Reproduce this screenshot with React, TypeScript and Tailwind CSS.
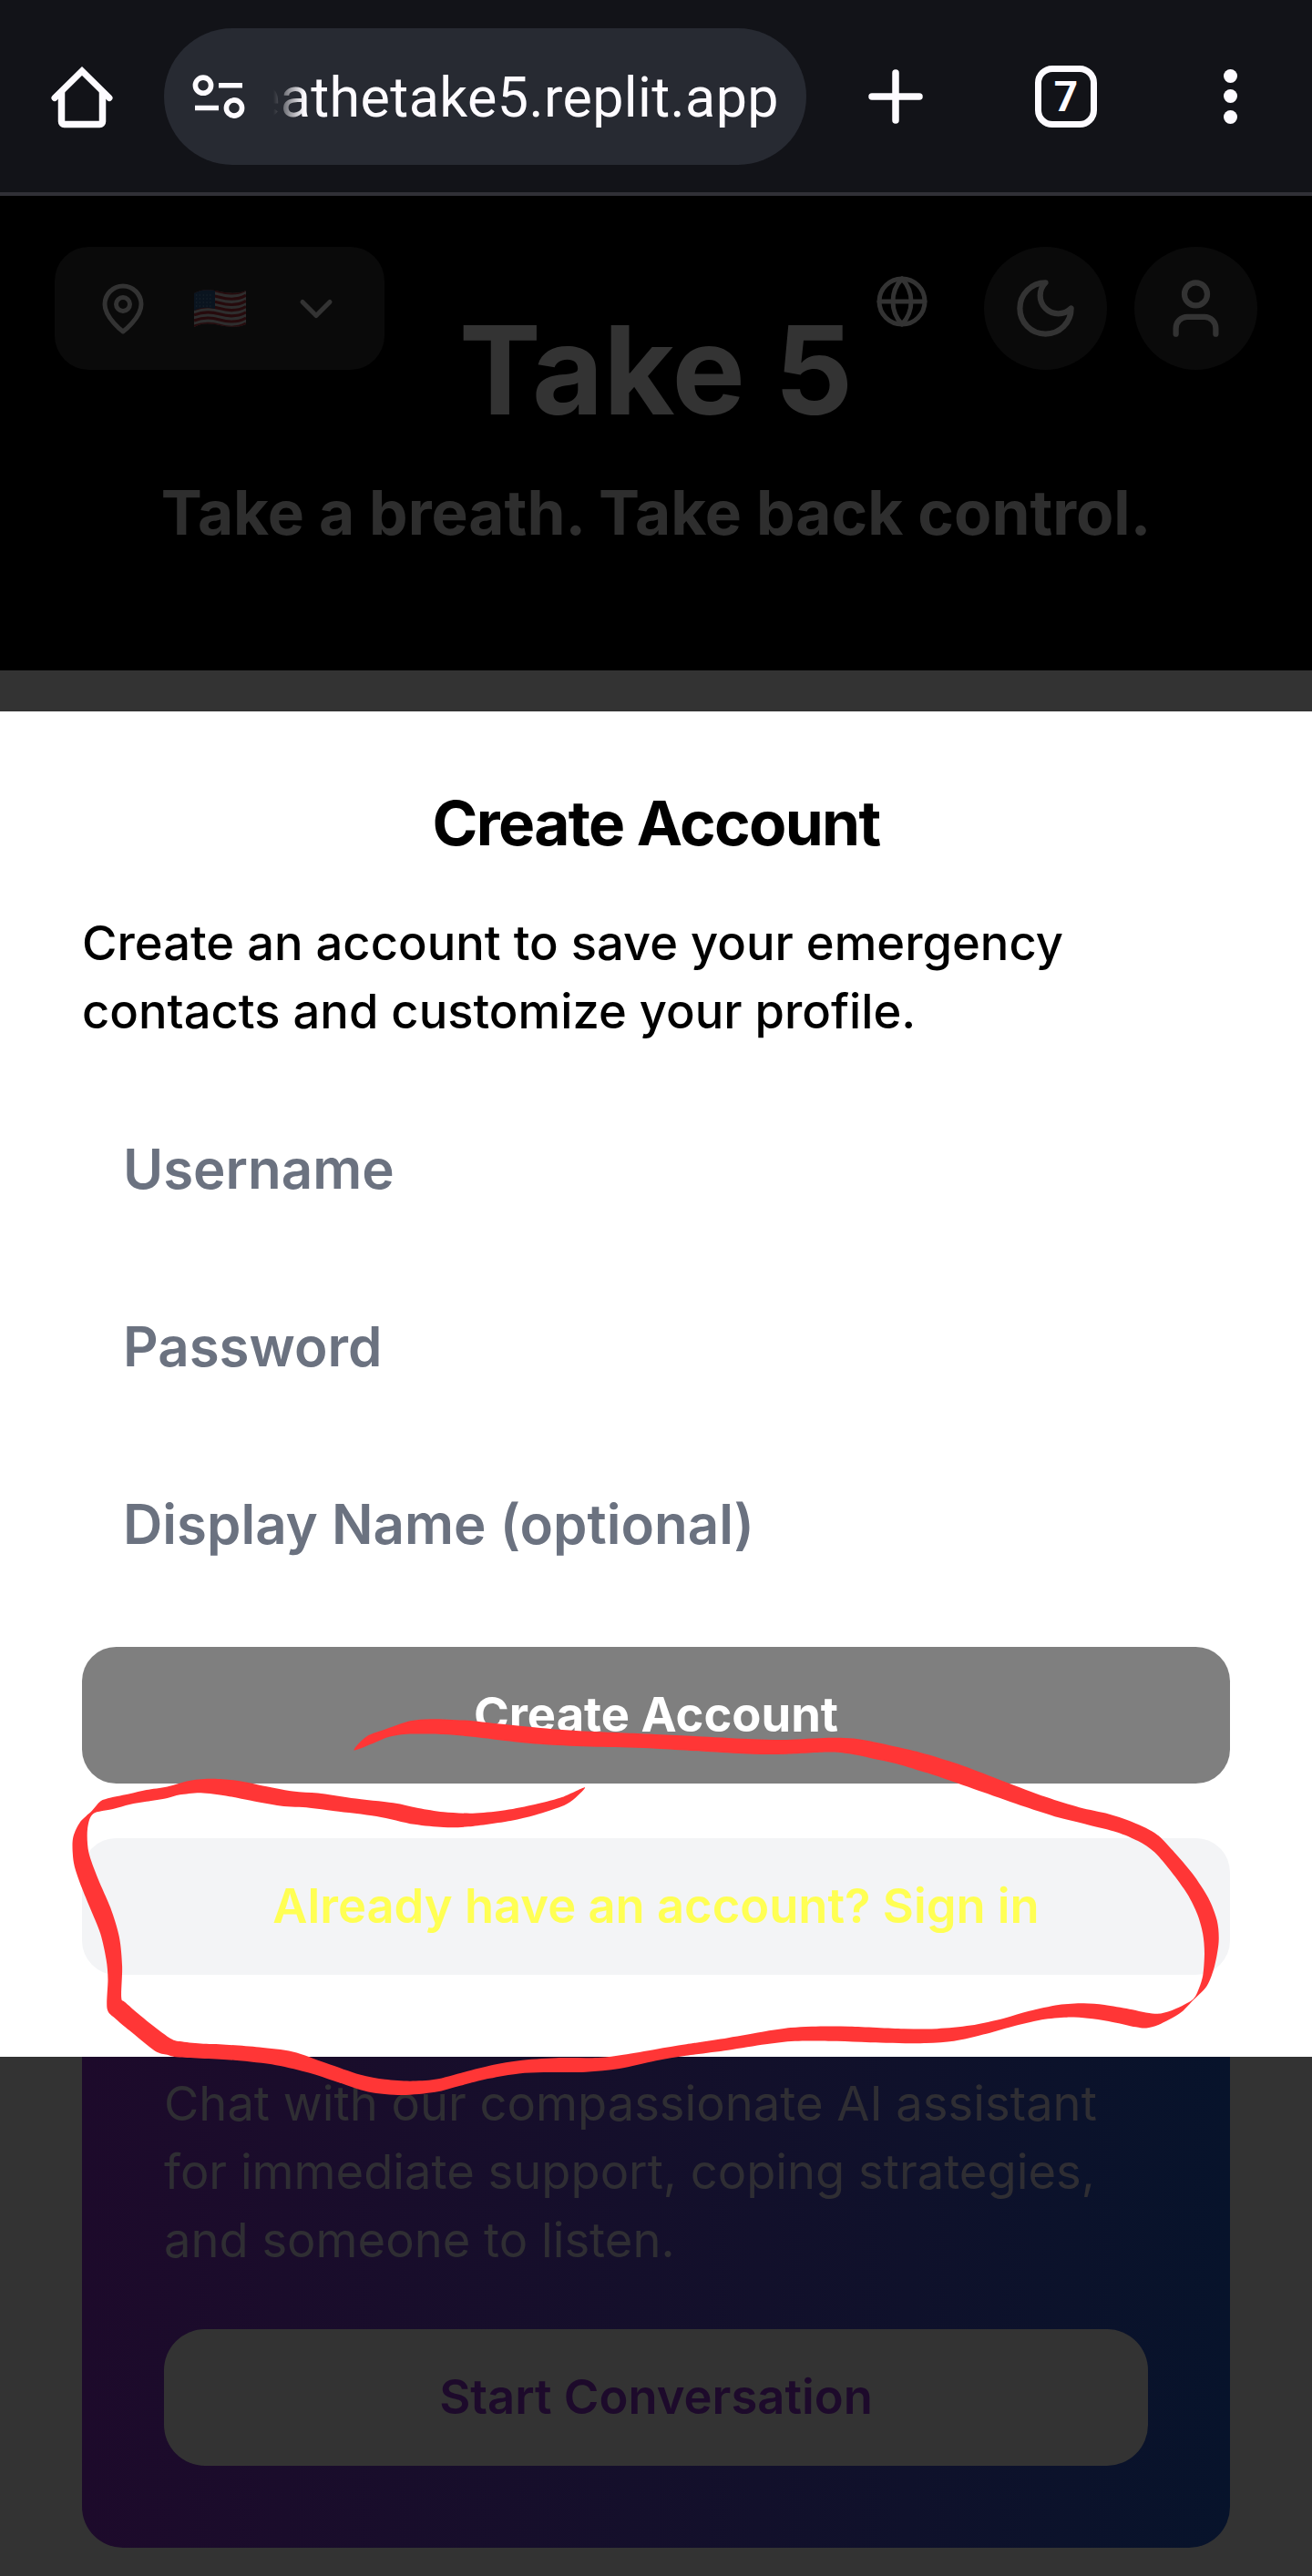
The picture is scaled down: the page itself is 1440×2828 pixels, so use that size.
import React from "react";
import { ChevronDown, Globe, Moon, User } from "lucide-react";

type Point = [number, number];

// Outline of the hand-drawn marker loop, in the marker canvas' own units (3136 x 1568).
const markerOutline: Point[] = [
  [846, 396], [876, 354], [925, 330], [980, 306], [1030, 300], [1110, 304], [1200, 316], [1320, 331], [1420, 339],
  [1568, 347], [1680, 354], [1800, 362], [1880, 364], [1980, 358], [2040, 360], [2090, 371], [2140, 385],
  [2200, 403], [2300, 443], [2400, 492], [2500, 540], [2580, 572], [2650, 592], [2700, 613], [2760, 650],
  [2800, 700], [2850, 775], [2888, 850], [2909, 920], [2913, 985], [2903, 1060], [2885, 1120], [2849, 1168],
  [2820, 1205], [2770, 1240], [2740, 1250], [2715, 1247], [2650, 1229], [2600, 1220], [2550, 1217],
  [2490, 1224], [2420, 1245], [2350, 1270], [2280, 1290], [2200, 1297], [2080, 1294], [2000, 1290],
  [1900, 1290], [1830, 1300], [1740, 1318], [1640, 1335], [1568, 1350], [1480, 1375], [1400, 1385],
  [1300, 1386], [1240, 1390], [1170, 1405], [1100, 1427], [1040, 1447], [960, 1456], [880, 1446],
  [800, 1413], [740, 1388], [660, 1364], [560, 1349], [430, 1340], [400, 1332], [370, 1320], [310, 1258],
  [275, 1220], [256, 1190], [258, 1100], [254, 1040], [240, 960], [215, 880], [190, 800], [176, 740],
  [174, 670], [190, 620], [220, 582], [240, 553], [265, 542], [310, 530], [350, 518], [400, 508], [455, 489],
  [510, 484], [570, 490], [620, 503], [700, 522], [760, 528], [840, 543], [940, 558], [1000, 574],
  [1060, 586], [1130, 590], [1200, 582], [1270, 565], [1340, 542], [1398, 510], [1368, 550], [1340, 570],
  [1280, 595], [1220, 613], [1120, 631], [1060, 633], [990, 624], [900, 599], [800, 583], [740, 573],
  [670, 567], [600, 551], [540, 536], [480, 527], [430, 533], [400, 543], [350, 554], [310, 563], [270, 577],
  [222, 592], [209, 640], [212, 710], [234, 790], [264, 880], [285, 970], [292, 1060], [290, 1155],
  [300, 1172], [350, 1227], [405, 1280], [430, 1291], [480, 1298], [540, 1301], [620, 1309], [700, 1323],
  [780, 1358], [860, 1393], [920, 1408], [980, 1413], [1040, 1408], [1110, 1385], [1180, 1363], [1240, 1350],
  [1330, 1342], [1430, 1341], [1490, 1332], [1568, 1315], [1640, 1300], [1740, 1280], [1830, 1260],
  [1890, 1249], [1940, 1245], [2030, 1245], [2160, 1252], [2240, 1252], [2320, 1242], [2400, 1220],
  [2460, 1198], [2530, 1179], [2590, 1174], [2640, 1179], [2700, 1192], [2760, 1206], [2800, 1196],
  [2847, 1166], [2862, 1140], [2875, 1090], [2879, 1020], [2875, 960], [2862, 900], [2838, 838], [2800, 770],
  [2760, 710], [2720, 675], [2670, 648], [2600, 625], [2530, 603], [2450, 570], [2350, 525], [2250, 480],
  [2150, 440], [2080, 420], [2030, 407], [1980, 402], [1880, 408], [1800, 408], [1700, 401], [1568, 391],
  [1440, 386], [1320, 380], [1230, 370], [1130, 355], [1060, 347], [980, 346], [930, 355], [895, 373],
];

// Closed Catmull-Rom curve through the given points.
function smooth(points: Point[]): string {
  const n = points.length;
  let d = `M${points[0][0]} ${points[0][1]}`;
  for (let i = 0; i < n; i++) {
    const a = points[(i + n - 1) % n];
    const b = points[i];
    const c = points[(i + 1) % n];
    const e = points[(i + 2) % n];
    const k = 7;
    d += `C${b[0] + (c[0] - a[0]) / k} ${b[1] + (c[1] - a[1]) / k} ${c[0] - (e[0] - b[0]) / k} ${c[1] - (e[1] - b[1]) / k} ${c[0]} ${c[1]}`;
  }
  return d + "Z";
}

function BrowserBar() {
  return (
    <div className="flex h-[215px] items-center border-b-4 border-[#303036] bg-[#121318] text-[#fdfbff]">
      <svg className="ml-[45px] h-[90px] w-[90px] shrink-0" viewBox="0 0 90 90" fill="none" stroke="currentColor">
        <path d="M15 46.500 45 17 75 46.500" strokeWidth="7" strokeLinecap="round" strokeLinejoin="miter" />
        <path d="M22.500 40V72.500a3 3 0 0 0 3 3H64.500a3 3 0 0 0 3-3V40" strokeWidth="7.500" />
      </svg>
      <div className="ml-[45px] flex h-[150px] w-[705px] items-center rounded-full bg-[#272a32] pl-[30px]">
        <svg className="h-[60px] w-[60px] shrink-0" viewBox="0 0 60 60" fill="none" stroke="currentColor" strokeWidth="5.6">
          <circle cx="13" cy="17.700" r="8.600" />
          <path d="M30 17.800H56M4 42.500H30" />
          <circle cx="47" cy="42.500" r="8.600" />
        </svg>
        <div className="mt-[3px] ml-[30px] flex h-[80px] w-[560px] items-center justify-end overflow-hidden whitespace-nowrap pr-[5px] font-['Roboto',sans-serif] text-[61px] leading-[80px] tracking-[0.4px] [mask-image:linear-gradient(to_right,transparent,black_34px)]">
          eathetake5.replit.app
        </div>
      </div>
      <svg className="ml-[53px] h-[90px] w-[90px] shrink-0" viewBox="0 0 90 90" fill="none" stroke="currentColor" strokeWidth="7.5" strokeLinecap="round">
        <path d="M45 19V71M19 45H71" />
      </svg>
      <div className="ml-[108px] flex h-[68px] w-[68px] items-center justify-center rounded-[19px] border-[7.5px] border-current font-['Roboto',sans-serif] text-[46px] leading-none font-bold">
        7
      </div>
      <div className="ml-[138.500px] flex flex-col gap-[7.5px]">
        <span className="h-[15px] w-[15px] rounded-full bg-current" />
        <span className="h-[15px] w-[15px] rounded-full bg-current" />
        <span className="h-[15px] w-[15px] rounded-full bg-current" />
      </div>
    </div>
  );
}

function Flag() {
  const wave = (y: number) => `M0 ${y + 2}C10 ${y - 2} 18 ${y - 2} 28 ${y + 1}S48 ${y + 4} 57 ${y - 1}`;
  return (
    <svg className="h-[42px] w-[57px]" viewBox="0 0 57 42">
      <defs>
        <clipPath id="flag">
          <path d="M0 4C10-1 18 0 28 2S48 5 57 1V38C48 42 38 41 28 39S10 36 0 41Z" />
        </clipPath>
      </defs>
      <g clipPath="url(#flag)">
        <rect width="57" height="42" fill="#2e2e2e" />
        {[1, 7.2, 13.4, 19.600, 25.800, 32, 38.200].map((y) => (
          <path key={y} d={wave(y)} fill="none" stroke="#260a0c" strokeWidth="3.1" />
        ))}
        <path d="M0 0H23V21C14 19 8 19 0 23Z" fill="#0a141f" />
        {[6, 10, 14, 18].map((y) => (
          <path key={y} d={`M2 ${y}H21`} stroke="#1d262e" strokeWidth="1.2" strokeDasharray="1.3 2.500" />
        ))}
      </g>
    </svg>
  );
}

function Header() {
  return (
    <header className="h-[521px] bg-black pt-[56px] font-bold text-[#333333]">
      <div className="flex items-start px-[60px]">
        <div className="flex h-[135px] w-[362px] items-center justify-between rounded-[37.5px] bg-[#0a0a0a] px-[45px]">
          <svg className="h-[60px] w-[60px]" viewBox="0 0 24 24" fill="none" stroke="currentColor" strokeWidth="2" strokeLinecap="round" strokeLinejoin="round">
            <path d="M20 10c0 6-8 12-8 12s-8-6-8-12a8 8 0 0 1 16 0Z" />
            <circle cx="12" cy="10" r="3" />
          </svg>
          <Flag />
          <ChevronDown className="h-[60px] w-[60px]" />
        </div>
        <Globe className="mt-[30px] ml-auto h-[60px] w-[60px]" />
        <div className="ml-[60px] flex h-[135px] w-[135px] items-center justify-center rounded-full bg-[#0a0a0a]">
          <svg className="h-[75px] w-[75px]" viewBox="0 0 24 24" fill="none" stroke="currentColor" strokeWidth="2" strokeLinecap="round" strokeLinejoin="round">
            <path d="M12 3a6 6 0 0 0 9 9 9 9 0 1 1-9-9Z" />
          </svg>
        </div>
        <div className="ml-[30px] flex h-[135px] w-[135px] items-center justify-center rounded-full bg-[#0a0a0a]">
          <User className="h-[75px] w-[75px]" />
        </div>
      </div>
      <h1 className="-mt-[75px] text-center text-[135px] leading-[150px]">Take 5</h1>
      <p className="mt-[29px] text-center text-[67.5px] leading-[105px] text-[#2e2e2e]">Take a breath. Take back control.</p>
    </header>
  );
}

function Field({ placeholder }: { placeholder: string }) {
  return (
    <input
      placeholder={placeholder}
      className="h-[150px] w-full bg-white px-[45px] text-[60px] font-semibold outline-none placeholder:text-[#6b7280] placeholder:opacity-100"
    />
  );
}

function AccountDialog() {
  return (
    <section className="flex h-[1477px] flex-col gap-[60px] bg-white px-[90px] pt-[89px] pb-[90px] text-black">
      <h2 className="text-center text-[67.5px] leading-[67.5px] font-bold tracking-[-0.025em]">Create Account</h2>
      <p className="text-[52.5px] leading-[75px] font-medium">
        Create an account to save your emergency
        <br />
        contacts and customize your profile.
      </p>
      <div className="flex flex-col gap-[45px]">
        <Field placeholder="Username" />
        <Field placeholder="Password" />
        <Field placeholder="Display Name (optional)" />
      </div>
      <button className="h-[150px] shrink-0 rounded-[37.5px] bg-[#7f7f7f] text-[52.5px] leading-[75px] font-bold text-white">Create Account</button>
      <button className="h-[150px] shrink-0 rounded-[37.5px] bg-[#f3f4f6] text-[52.5px] leading-[75px] font-semibold text-[#ffff54]">
        Already have an account? Sign in
      </button>
    </section>
  );
}

function ChatCard() {
  return (
    <section className="mx-[90px] flex h-[538.5px] flex-col gap-[60px] rounded-b-[45px] bg-linear-to-r from-[#1d0a2b] to-[#07132b] px-[90px] pt-[13.5px]">
      <p className="text-[52.5px] leading-[75px] text-[#2f2e33]">
        Chat with our compassionate AI assistant
        <br />
        for immediate support, coping strategies,
        <br />
        and someone to listen.
      </p>
      <button className="h-[150px] rounded-[45px] bg-[#333333] text-[52.5px] leading-[75px] font-semibold text-[#1d0a2b]">Start Conversation</button>
    </section>
  );
}

export default function App() {
  return (
    <main className="relative h-[2828px] w-[1440px] overflow-hidden bg-[#333333] font-['Inter',sans-serif]">
      <BrowserBar />
      <Header />
      <div className="h-[45px]" />
      <AccountDialog />
      <ChatCard />
      <svg className="pointer-events-none absolute top-[1780px] left-0 h-[560px] w-[1440px]" viewBox="0 0 3136 1568" preserveAspectRatio="none">
        <path d={smooth(markerOutline)} fill="#ff3636" />
      </svg>
    </main>
  );
}
